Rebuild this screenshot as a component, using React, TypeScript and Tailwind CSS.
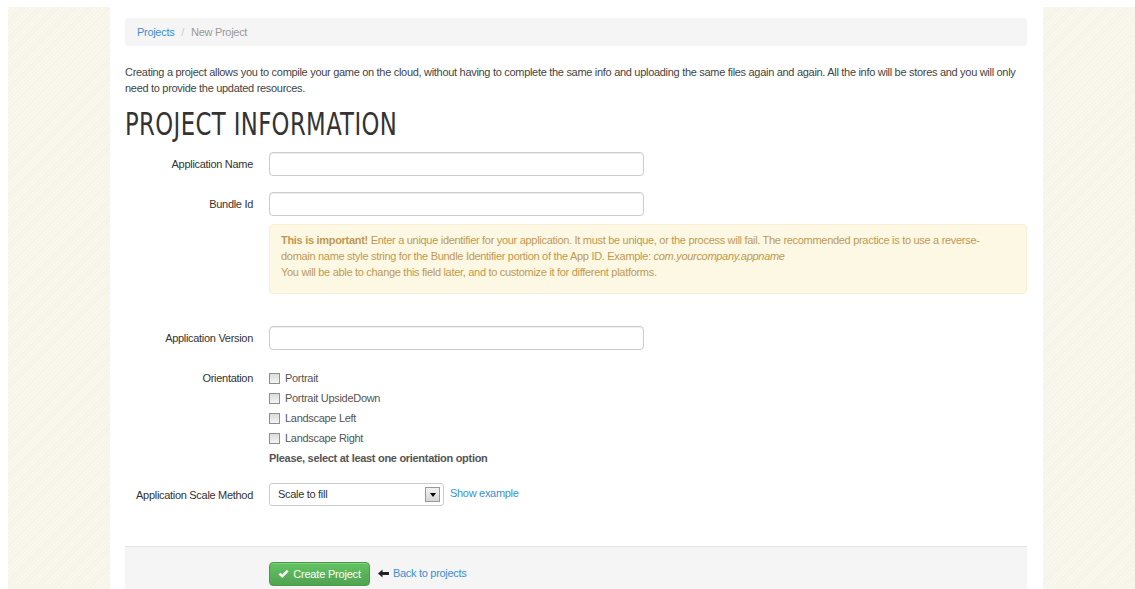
import React from 'react';

const ORIENTATIONS = ['Portrait', 'Portrait UpsideDown', 'Landscape Left', 'Landscape Right'];

const sideBg =
  'bg-[#f6f4e9] bg-[repeating-linear-gradient(135deg,#f5f2e6_0px,#f5f2e6_1px,#f8f6ed_1px,#f8f6ed_3px)]';

function Label({ children }: { children: React.ReactNode }) {
  return <div className="w-[128px] shrink-0 text-right leading-[20px] text-[#333]">{children}</div>;
}

function TextInput() {
  return (
    <div className="h-[24px] w-[375px] rounded-[4px] border border-[#cccccc] bg-white shadow-[inset_0_1px_1px_rgba(0,0,0,0.075)]" />
  );
}

function Checkbox({ label }: { label: string }) {
  return (
    <div className="flex h-[20px] items-center gap-[5px]">
      <span className="h-[11px] w-[11px] border border-[#8f8f8f] bg-gradient-to-b from-[#dcdcdc] to-[#f4f4f4]" />
      <span className="text-[#555]">{label}</span>
    </div>
  );
}

function CheckIcon() {
  return (
    <svg width="11" height="10" viewBox="0 0 11 10" className="fill-white">
      <path d="M0.5 5.5 L2.5 3.8 L4.3 5.6 L8.8 0.8 L10.6 2.4 L4.3 9 Z" />
    </svg>
  );
}

function ArrowLeftIcon() {
  return (
    <svg width="11" height="9" viewBox="0 0 11 9" className="fill-[#222]">
      <path d="M0 4.5 L4.5 0.5 L4.5 3 L11 3 L11 6 L4.5 6 L4.5 8.5 Z" />
    </svg>
  );
}

export default function App() {
  return (
    <div className="flex h-[589px] w-full overflow-hidden bg-white font-['Liberation_Sans',Arial,sans-serif] text-[11px] tracking-[-0.3px] text-[#333]">
      <div className={`ml-[8px] mt-[7px] w-[102px] shrink-0 ${sideBg}`} />

      <div className="flex w-[933px] shrink-0 flex-col pl-[15px] pr-[16px]">
        {/* breadcrumb */}
        <div className="mt-[18px] flex h-[28px] shrink-0 items-center rounded-[4px] bg-[#f5f5f5] px-[12px]">
          <a className="text-[#3b8fd2]">Projects</a>
          <span className="px-[7px] text-[#ccc]">/</span>
          <span className="text-[#999]">New Project</span>
        </div>

        <p className="mt-[18px] shrink-0 leading-[16px] text-[#444]">
          Creating a project allows you to compile your game on the cloud, without having to complete the same info
          and uploading the same files again and again. All the info will be stores and you will only need to provide
          the updated resources.
        </p>

        <h1 className="mt-[11px] h-[34px] shrink-0 origin-left scale-x-[0.79] whitespace-nowrap font-['DejaVu_Sans_Condensed','Liberation_Sans_Narrow',sans-serif] text-[32px] font-normal leading-[34px] tracking-[0.5px] text-[#333]">
          PROJECT INFORMATION
        </h1>

        {/* form */}
        <div className="mt-[11px] flex shrink-0 flex-col">
          <div className="flex items-center gap-[16px]">
            <Label>Application Name</Label>
            <TextInput />
          </div>

          <div className="mt-[16px] flex items-start gap-[16px]">
            <div className="flex h-[24px] items-center">
              <Label>Bundle Id</Label>
            </div>
            <div className="flex flex-1 flex-col">
              <TextInput />
              <div className="mt-[8px] h-[70px] rounded-[4px] border border-[#fbeed5] bg-[#fcf8e3] pl-[11px] pr-[35px] pt-[7px] leading-[16px] text-[#c09853]">
                <strong>This is important!</strong> Enter a unique identifier for your application. It must be unique,
                or the process will fail. The recommended practice is to use a reverse-domain name style string for the
                Bundle Identifier portion of the App ID. Example: <em>com.yourcompany.appname</em>
                <br />
                You will be able to change this field later, and to customize it for different platforms.
              </div>
            </div>
          </div>

          <div className="mt-[32px] flex items-center gap-[16px]">
            <Label>Application Version</Label>
            <TextInput />
          </div>

          <div className="mt-[18px] flex items-start gap-[16px]">
            <Label>Orientation</Label>
            <div className="flex flex-col">
              {ORIENTATIONS.map((o) => (
                <Checkbox key={o} label={o} />
              ))}
              <div className="font-bold leading-[20px] text-[#555]">Please, select at least one orientation option</div>
            </div>
          </div>

          <div className="mt-[15px] flex items-center gap-[16px]">
            <Label>Application Scale Method</Label>
            <div className="flex items-center gap-[6px]">
              <div className="flex h-[23px] w-[175px] items-center justify-between rounded-[3px] border border-[#cccccc] bg-white pl-[8px] pr-[3px]">
                <span>Scale to fill</span>
                <span className="flex h-[15px] w-[15px] items-center justify-center border border-[#9a9a9a] bg-gradient-to-b from-[#f2f2f2] to-[#d6d6d6]">
                  <span className="h-0 w-0 border-x-[3px] border-t-[4px] border-x-transparent border-t-black" />
                </span>
              </div>
              <a className="-mt-[2px] text-[#3b8fd2]">Show example</a>
            </div>
          </div>
        </div>

        {/* form actions */}
        <div className="mt-[40px] flex flex-1 items-start gap-[8px] border-t border-[#e5e5e5] bg-[#f5f5f5] pl-[144px] pt-[15px]">
          <button className="flex h-[24px] w-[101px] items-center justify-center gap-[4px] rounded-[4px] border border-[#4a9a4a] bg-gradient-to-b from-[#62c462] to-[#51a351] text-[11px] tracking-[-0.2px] text-white shadow-[inset_0_1px_0_rgba(255,255,255,0.2)]">
            <CheckIcon />
            Create Project
          </button>
          <div className="mt-[3px] flex items-center gap-[4px]">
            <ArrowLeftIcon />
            <a className="text-[#3b8fd2]">Back to projects</a>
          </div>
        </div>
      </div>

      <div className={`mt-[7px] flex-1 ${sideBg}`} />
    </div>
  );
}
